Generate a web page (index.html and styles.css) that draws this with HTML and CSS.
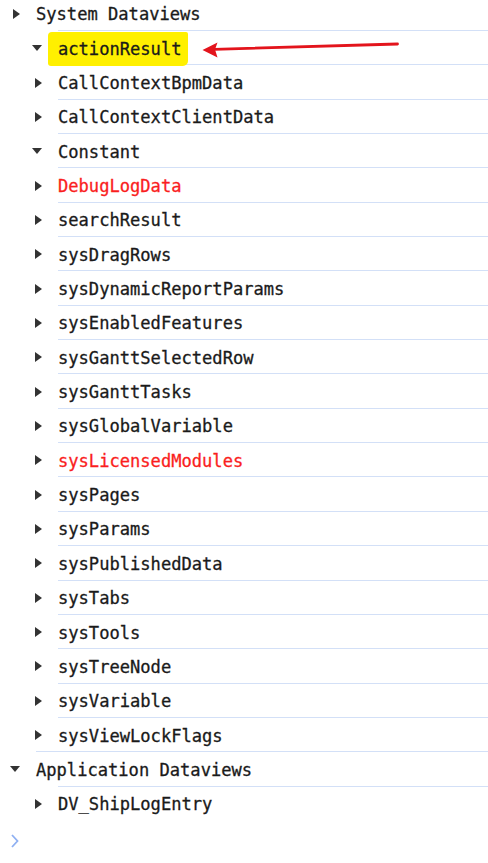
FILE: index.html
```html
<!DOCTYPE html>
<html>
<head>
<meta charset="utf-8">
<link rel="stylesheet" href="styles.css">
</head>
<body>
<ul class="tree">
  <li>
    <div class="row first"><span class="tog"><i class="tri-right"></i></span><span class="label">System Dataviews</span></div>
    <ul class="children">
      <li><div class="row"><span class="tog"><i class="tri-down"></i></span><span class="label"><span class="hl">actionResult</span></span></div></li>
      <li><div class="row"><span class="tog"><i class="tri-right"></i></span><span class="label">CallContextBpmData</span></div></li>
      <li><div class="row"><span class="tog"><i class="tri-right"></i></span><span class="label">CallContextClientData</span></div></li>
      <li><div class="row"><span class="tog"><i class="tri-down"></i></span><span class="label">Constant</span></div></li>
      <li><div class="row"><span class="tog"><i class="tri-right"></i></span><span class="label err">DebugLogData</span></div></li>
      <li><div class="row"><span class="tog"><i class="tri-right"></i></span><span class="label">searchResult</span></div></li>
      <li><div class="row"><span class="tog"><i class="tri-right"></i></span><span class="label">sysDragRows</span></div></li>
      <li><div class="row"><span class="tog"><i class="tri-right"></i></span><span class="label">sysDynamicReportParams</span></div></li>
      <li><div class="row"><span class="tog"><i class="tri-right"></i></span><span class="label">sysEnabledFeatures</span></div></li>
      <li><div class="row"><span class="tog"><i class="tri-right"></i></span><span class="label">sysGanttSelectedRow</span></div></li>
      <li><div class="row"><span class="tog"><i class="tri-right"></i></span><span class="label">sysGanttTasks</span></div></li>
      <li><div class="row"><span class="tog"><i class="tri-right"></i></span><span class="label">sysGlobalVariable</span></div></li>
      <li><div class="row"><span class="tog"><i class="tri-right"></i></span><span class="label err">sysLicensedModules</span></div></li>
      <li><div class="row"><span class="tog"><i class="tri-right"></i></span><span class="label">sysPages</span></div></li>
      <li><div class="row"><span class="tog"><i class="tri-right"></i></span><span class="label">sysParams</span></div></li>
      <li><div class="row"><span class="tog"><i class="tri-right"></i></span><span class="label">sysPublishedData</span></div></li>
      <li><div class="row"><span class="tog"><i class="tri-right"></i></span><span class="label">sysTabs</span></div></li>
      <li><div class="row"><span class="tog"><i class="tri-right"></i></span><span class="label">sysTools</span></div></li>
      <li><div class="row"><span class="tog"><i class="tri-right"></i></span><span class="label">sysTreeNode</span></div></li>
      <li><div class="row"><span class="tog"><i class="tri-right"></i></span><span class="label">sysVariable</span></div></li>
      <li><div class="row"><span class="tog"><i class="tri-right"></i></span><span class="label">sysViewLockFlags</span></div></li>
    </ul>
  </li>
  <li>
    <div class="row"><span class="tog"><i class="tri-down"></i></span><span class="label">Application Dataviews</span></div>
    <ul class="children">
      <li><div class="row"><span class="tog"><i class="tri-right"></i></span><span class="label">DV_ShipLogEntry</span></div></li>
    </ul>
  </li>
</ul>
<div class="prompt"><svg width="10" height="16" viewBox="0 0 10 16"><path d="M2 2 L7.5 8 L2 14" fill="none" stroke="#8fb0f2" stroke-width="1.8"/></svg></div>
<svg class="arrow" width="488" height="100" viewBox="0 0 488 100">
  <line x1="214" y1="49.3" x2="397.5" y2="44" stroke="#e3141c" stroke-width="2.8" stroke-linecap="round"/>
  <path d="M202.5 50 L217.5 42.5 L215 49.5 L217.5 57.5 Z" fill="#e3141c"/>
</svg>
</body>
</html>
```
FILE: styles.css
```css
html, body {
  margin: 0;
  padding: 0;
  background: #fff;
}
body {
  position: relative;
  width: 488px;
  height: 863px;
  overflow: hidden;
  font-family: "DejaVu Sans Mono", "Liberation Mono", monospace;
  font-size: 17.1px;
  color: #1a1a1a;
  -webkit-text-stroke: 0.3px #1a1a1a;
}
ul {
  list-style: none;
  margin: 0;
  padding: 0;
}
.tree {
  margin-top: -4.35px;
}
.children {
  padding-left: 22px;
}
.row {
  display: flex;
  align-items: stretch;
  height: 34.35px;
}
.tog {
  width: 36px;
  flex: none;
  display: flex;
  align-items: center;
}
.label {
  flex: 1;
  display: flex;
  align-items: center;
  padding-top: 2px;
  border-top: 1px solid #d3e0f7;
  white-space: nowrap;
  line-height: 20px;
}
.row.first .label {
  border-top-color: transparent;
}
.err {
  color: #fa1e1e;
  -webkit-text-stroke-color: #fa1e1e;
}
.tri-right {
  display: block;
  width: 0;
  height: 0;
  margin-left: 13px;
  margin-top: 2px;
  border-left: 7px solid #333;
  border-top: 5px solid transparent;
  border-bottom: 5px solid transparent;
}
.tri-down {
  display: block;
  width: 0;
  height: 0;
  margin-left: 10px;
  margin-top: 2px;
  border-top: 6px solid #333;
  border-left: 5.5px solid transparent;
  border-right: 5.5px solid transparent;
}
.hl {
  position: relative;
  display: inline-block;
  isolation: isolate;
}
.hl::before {
  content: "";
  position: absolute;
  left: -10px;
  right: -6px;
  top: -7px;
  bottom: -7px;
  background: #fff000;
  border-radius: 4px 2px 5px 3px;
  z-index: -1;
}
.prompt {
  padding: 13px 0 0 10px;
  height: 16px;
}
.prompt svg {
  display: block;
}
.arrow {
  position: absolute;
  left: 0;
  top: 0;
}
```
